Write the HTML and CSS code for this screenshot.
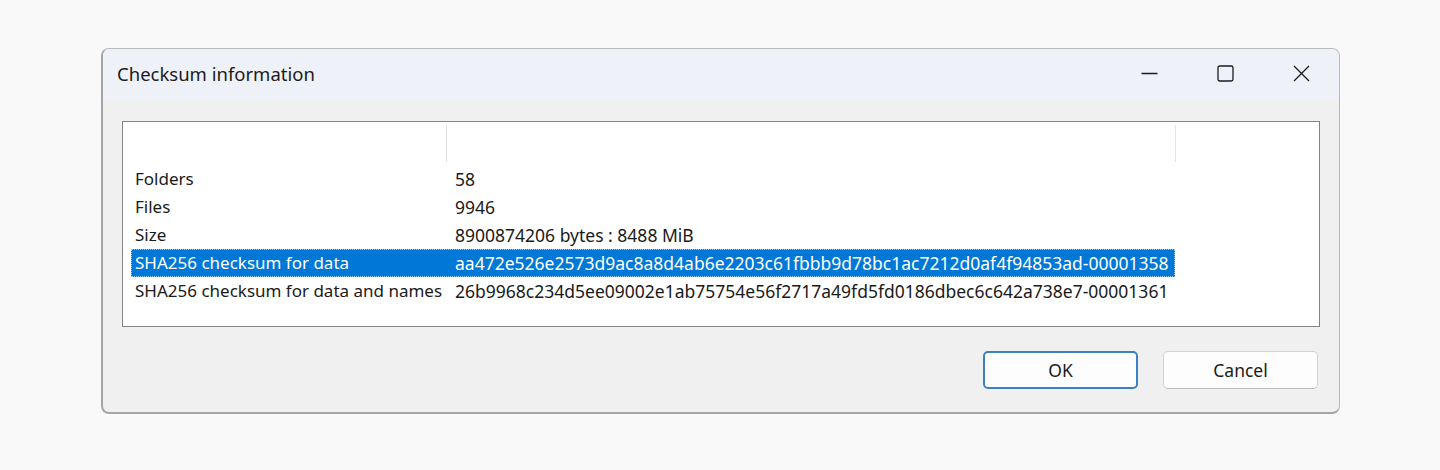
FILE: index.html
```html
<!DOCTYPE html>
<html lang="en">
<head>
  <meta charset="UTF-8" />
  <title>Checksum information</title>
  <link rel="stylesheet" href="styles.css">
</head>
<body>

  <div class="window">
    <div class="titlebar">
      <div class="title">Checksum information</div>
      <div class="controls">
        <button class="ctl" aria-label="Minimize">
          <svg width="17" height="17" viewBox="0 0 17 17"><path d="M0.5 8.5h16" stroke="#1b1b1b" stroke-width="1.3" fill="none"/></svg>
        </button>
        <button class="ctl" aria-label="Maximize">
          <svg width="17" height="17" viewBox="0 0 17 17"><rect x="1" y="1" width="15" height="15" rx="1.8" stroke="#1b1b1b" stroke-width="1.3" fill="none"/></svg>
        </button>
        <button class="ctl" aria-label="Close">
          <svg width="17" height="17" viewBox="0 0 17 17"><path d="M1 1l15 15M16 1L1 16" stroke="#1b1b1b" stroke-width="1.3" fill="none"/></svg>
        </button>
      </div>
    </div>

    <div class="content">
      <div class="list">
        <div class="list-head">
          <div class="head-col first"></div>
          <div class="head-col second"></div>
        </div>
        <div class="row"><span class="name">Folders</span><span class="value">58</span></div>
        <div class="row"><span class="name">Files</span><span class="value">9946</span></div>
        <div class="row"><span class="name">Size</span><span class="value">8900874206 bytes : 8488 MiB</span></div>
        <div class="row selected"><span class="name">SHA256 checksum for data</span><span class="value">aa472e526e2573d9ac8a8d4ab6e2203c61fbbb9d78bc1ac7212d0af4f94853ad-00001358</span></div>
        <div class="row"><span class="name">SHA256 checksum for data and names</span><span class="value">26b9968c234d5ee09002e1ab75754e56f2717a49fd5fd0186dbec6c642a738e7-00001361</span></div>
      </div>

      <div class="actions">
        <button class="btn default">OK</button>
        <button class="btn">Cancel</button>
      </div>
    </div>
  </div>

</body>
</html>
```

FILE: styles.css
```css
* { box-sizing: border-box; }
body { margin: 0; background: #f9f9f9; font-family: "Segoe UI", "Noto Sans", "Liberation Sans", sans-serif; color: #1a1a1a; }

.window { margin: 48px 0 0 101px; width: 1239px; height: 366px; background: #f0f0f0; border: 1px solid #b9b9b9; border-left: 2px solid #a5a5a5; border-bottom: 2px solid #a5a5a5; border-radius: 8px; overflow: hidden; display: flex; flex-direction: column; }

.titlebar { height: 51px; background: #eef2f8; display: flex; align-items: center; justify-content: space-between; }
.title { padding-left: 14px; padding-bottom: 2px; font-size: 18.5px; color: #1b1b1b; }
.controls { display: flex; height: 100%; margin-right: 0; }
.ctl { width: 76px; height: 100%; border: none; background: transparent; display: flex; align-items: center; justify-content: center; padding: 0 0 2px; }

.content { flex: 1; padding: 21px 19px 0 19px; }

.list { height: 206px; background: #fff; border: 1px solid #848484; }
.list-head { display: flex; height: 43px; }
.head-col { height: 37px; margin-top: 3px; border-right: 1px solid #e3e3e3; }
.head-col.first { width: 324px; }
.head-col.second { width: 729px; }

.row { display: flex; height: 28px; align-items: center; margin-left: 8px; width: 1044px; font-size: 17px; white-space: nowrap; padding-bottom: 1px; }
.row .name { width: 315px; padding-left: 4px; }
.row .value { padding-left: 9px; font-size: 17.5px; }
.row.selected { background: #0078d7; color: #fff; outline: 1px dotted #9cc9f0; outline-offset: -1px; }

.actions { display: flex; justify-content: flex-end; gap: 25px; margin-top: 24px; padding-right: 2px; }
.btn { width: 155px; height: 38px; font: inherit; font-size: 17.5px; color: #1b1b1b; background: #fdfdfd; border: 1px solid #d3d3d3; border-bottom-color: #bcbcbc; border-radius: 5px; }
.btn.default { border: 2px solid #3c7fc4; }
```
